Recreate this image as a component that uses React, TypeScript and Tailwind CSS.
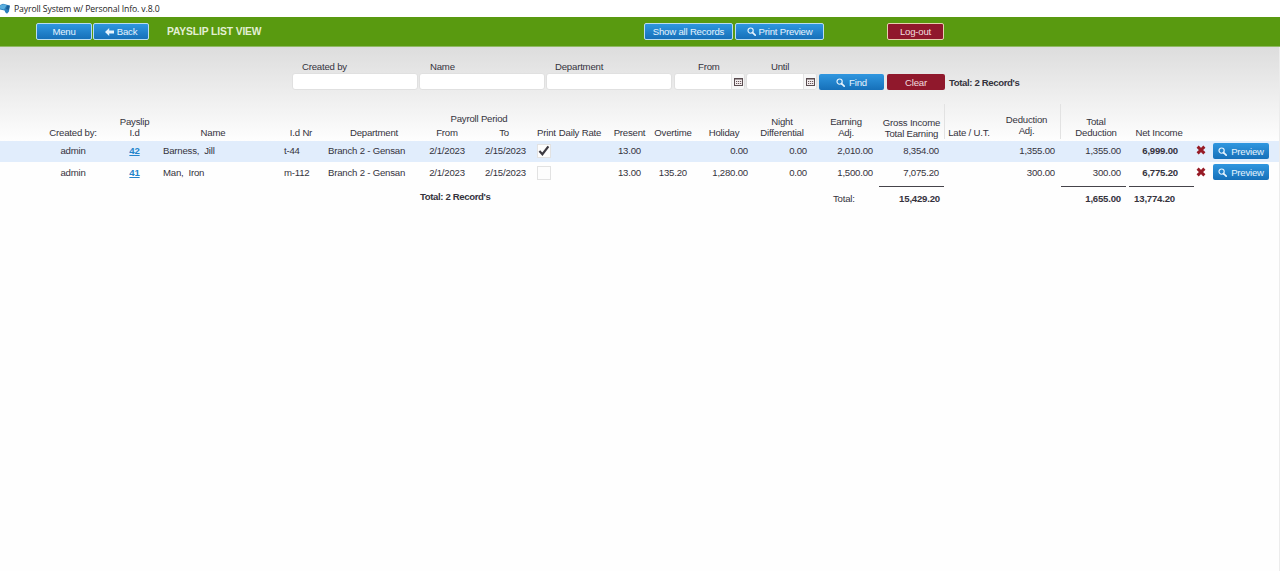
import { useState } from "react";
import type { ReactNode } from "react";
import clsx from "clsx";

type Payslip = {
  id: string;
  createdBy: string;
  name: string;
  idNr: string;
  department: string;
  from: string;
  to: string;
  dailyRate: string;
  present: string;
  overtime: string;
  holiday: string;
  night: string;
  earningAdj: string;
  gross: string;
  late: string;
  deductionAdj: string;
  totalDeduction: string;
  net: string;
};

const payslips: Payslip[] = [
  { id: "42", createdBy: "admin", name: "Barness,  Jill", idNr: "t-44", department: "Branch 2 - Gensan", from: "2/1/2023", to: "2/15/2023", dailyRate: "", present: "13.00", overtime: "", holiday: "0.00", night: "0.00", earningAdj: "2,010.00", gross: "8,354.00", late: "", deductionAdj: "1,355.00", totalDeduction: "1,355.00", net: "6,999.00" },
  { id: "41", createdBy: "admin", name: "Man,  Iron", idNr: "m-112", department: "Branch 2 - Gensan", from: "2/1/2023", to: "2/15/2023", dailyRate: "", present: "13.00", overtime: "135.20", holiday: "1,280.00", night: "0.00", earningAdj: "1,500.00", gross: "7,075.20", late: "", deductionAdj: "300.00", totalDeduction: "300.00", net: "6,775.20" },
];

function SearchIcon({ className }: { className?: string }) {
  return (
    <svg viewBox="0 0 10 10" className={clsx("size-[9px] shrink-0", className)} fill="none" stroke="currentColor" aria-hidden>
      <circle cx="4" cy="4" r="2.9" strokeWidth="1.3" />
      <path d="M6.2 6.2 9.1 9.1" strokeWidth="1.8" strokeLinecap="round" />
    </svg>
  );
}

function CalendarIcon() {
  return (
    <svg viewBox="0 0 9 8" className="h-2 w-[9px]" aria-hidden>
      <rect x="0.5" y="0.5" width="8" height="7" fill="#f3eeee" stroke="#5a4c50" />
      <path d="M0 1h9" stroke="#5a4c50" />
      <path d="M2 3.5h1.2M4 3.5h1.2M6 3.5h1.2M2 5.5h1.2M4 5.5h1.2M6 5.5h1.2" stroke="#6b565c" />
    </svg>
  );
}

function Button({ className, red, children }: { className: string; red?: boolean; children: ReactNode }) {
  return (
    <button
      className={clsx(
        "flex shrink-0 items-center justify-center rounded-[2px] whitespace-nowrap",
        red ? "bg-[#90182c] text-[#f0dcdf]" : "bg-linear-to-b from-[#2f97e0] to-[#1670b9] text-[#e6f3fd]",
        className,
      )}
    >
      {children}
    </button>
  );
}

function Field({ label, className, labelClass, date }: { label: string; className: string; labelClass: string; date?: boolean }) {
  return (
    <label className={clsx("flex shrink-0 flex-col", className)}>
      <span className={clsx("h-[13px] leading-[13px]", labelClass)}>{label}</span>
      <span className="flex h-[17px] overflow-hidden rounded-[3px] border border-[#e0e0e0] bg-white">
        <input className="min-w-0 flex-1 px-1 outline-none" />
        {date && (
          <span className="flex w-[13px] items-center justify-center border-l border-[#e4e4e4] bg-[#f7f7f7]">
            <CalendarIcon />
          </span>
        )}
      </span>
    </label>
  );
}

function Head({ className, lines }: { className: string; lines: string[] }) {
  return (
    <div className={clsx("flex shrink-0 flex-col justify-end text-center leading-[11px]", className)}>
      {lines.map((line) => (
        <span key={line}>{line}</span>
      ))}
    </div>
  );
}

function Row({ slip, active, checked, onToggle }: { slip: Payslip; active: boolean; checked: boolean; onToggle: () => void }) {
  return (
    <div className={clsx("flex h-[21px] items-center pl-10 *:shrink-0", active && "bg-[#e1edfc] pb-0.5")}>
      <div className="w-[66px] text-center">{slip.createdBy}</div>
      <div className="w-[57px] text-center">
        <a href="#" className="font-bold text-[#2384cb] underline underline-offset-1">{slip.id}</a>
      </div>
      <div className="w-[117px] whitespace-pre">{slip.name}</div>
      <div className="w-[42px] pl-1">{slip.idNr}</div>
      <div className="w-[104px] pl-1.5">{slip.department}</div>
      <div className="w-[42px] text-center">{slip.from}</div>
      <div className="w-[69px] pl-1.5 text-center">{slip.to}</div>
      <div className="w-5">
        <button
          aria-label="Print"
          onClick={onToggle}
          className="flex size-[14px] items-center justify-center border border-[#e2e2e2] bg-[#fdfdfd]"
        >
          {checked && (
            <svg viewBox="0 0 12 12" className="size-3" fill="none" stroke="#3d3a42" aria-hidden>
              <path d="M1.4 6 4.4 9.2 10.4 1.4" strokeWidth="2.2" />
            </svg>
          )}
        </button>
      </div>
      <div className="w-[46px]">{slip.dailyRate}</div>
      <div className="w-[49px] pr-[11px] text-right">{slip.present}</div>
      <div className="w-[42px] pr-[7px] text-right">{slip.overtime}</div>
      <div className="w-[60px] pr-1.5 text-right">{slip.holiday}</div>
      <div className="w-14 pr-[3px] text-right">{slip.night}</div>
      <div className="w-[69px] pr-1.5 text-right">{slip.earningAdj}</div>
      <div className="w-[66px] pr-1.5 text-right">{slip.gross}</div>
      <div className="w-12">{slip.late}</div>
      <div className="w-[68px] pr-1.5 text-right">{slip.deductionAdj}</div>
      <div className="w-[68px] pr-2 text-right">{slip.totalDeduction}</div>
      <div className="w-[65px] pr-4 text-right font-bold">{slip.net}</div>
      <div className="w-[19px] pl-0.5">
        <svg viewBox="0 0 10 10" className="mb-0.5 size-[10px]" aria-label="Delete">
          <path d="M1.6 1.6 8.4 8.4M8.4 1.6 1.6 8.4" stroke="#971b26" strokeWidth="2.9" />
        </svg>
      </div>
      <Button className={clsx("h-4 w-14 gap-1", active ? "mt-px" : "mb-px")}>
        <SearchIcon />
        Preview
      </Button>
    </div>
  );
}

export default function App() {
  const [printed, setPrinted] = useState<string[]>(["42"]);

  const toggle = (id: string) =>
    setPrinted((current) => (current.includes(id) ? current.filter((item) => item !== id) : [...current, id]));

  return (
    <div className="flex h-[571px] w-[1280px] flex-col overflow-hidden bg-[#fefefe] font-['Liberation_Sans',Arial,sans-serif] text-[9.6px] leading-[11px] tracking-[-0.2px] text-[#35333d]">
      <header className="flex h-[17px] shrink-0 items-center gap-[3px] bg-white">
        <svg viewBox="0 0 11 11" className="size-[11px]" aria-hidden>
          <path d="M0 2 3 .8 9.8 2.6 9 8.6 7 10.8 5.2 9.2 4.6 7.4 0 6.4Z" fill="#2b7fbd" />
          <path d="M0 2.4 3.6 1.2 6.6 2.2 4 6.4 0 5.6Z" fill="#5aaede" />
          <path d="M7 2.4 9.8 2.8 8.8 7 6 6Z" fill="#1c5f99" />
        </svg>
        <span className="pt-px font-['Open_Sans',sans-serif] text-[8.7px] leading-4 tracking-[-0.13px] text-[#242424]">Payroll System w/ Personal Info. v.8.0</span>
      </header>

      <div className="flex h-[30px] shrink-0 items-center border-b border-[#8fb964] bg-[#599a10] pl-9">
        <Button className="h-[17px] w-14 border border-[#b9dcf0]">Menu</Button>
        <Button className="ml-px h-[17px] w-14 gap-[3px] border border-[#b9dcf0]">
          <svg viewBox="0 0 9 8" className="h-2 w-[9px]" fill="currentColor" aria-hidden>
            <path d="M0 4 4.2 0v2.6H9v2.8H4.2V8Z" />
          </svg>
          Back
        </Button>
        <h1 className="ml-[18px] w-[477px] text-[10.3px] font-bold tracking-[-0.12px] text-[#e3efd4]">PAYSLIP LIST VIEW</h1>
        <Button className="h-[17px] w-[89px] border border-[#b9dcf0]">Show all Records</Button>
        <Button className="ml-0.5 h-[17px] w-[89px] gap-[3px] border border-[#b9dcf0]">
          <SearchIcon />
          Print Preview
        </Button>
        <Button red className="ml-[63px] h-[17px] w-[57px] border border-[#e6cfae]">Log-out</Button>
      </div>

      <main className="flex min-h-0 flex-1 flex-col border-r border-[#ececec]">
        <section className="shrink-0 bg-linear-to-b from-[#dddddd] to-[#fefefe]">
          <div className="flex h-[57px] items-start pt-[13px] pl-[292px]">
            <Field label="Created by" className="w-[126px]" labelClass="pl-2.5" />
            <Field label="Name" className="ml-px w-[126px]" labelClass="pl-[11px]" />
            <Field label="Department" className="ml-px w-[126px]" labelClass="pl-[9px]" />
            <Field label="From" className="ml-0.5 w-[71px]" labelClass="pl-6" date />
            <Field label="Until" className="ml-px w-[71px]" labelClass="pl-[25px]" date />
            <Button className="mt-[14px] ml-0.5 h-4 w-[65px] gap-1">
              <SearchIcon />
              Find
            </Button>
            <Button red className="mt-[14px] ml-[3px] h-4 w-[58px]">Clear</Button>
            <span className="mt-[17px] ml-1 font-bold tracking-[-0.37px]">Total: 2 Record's</span>
          </div>

          <div className="flex h-[37px] items-end pb-[3px] pl-10 whitespace-nowrap">
            <Head className="w-[66px]" lines={["Created by:"]} />
            <Head className="w-[57px]" lines={["Payslip", "I.d"]} />
            <Head className="w-[100px]" lines={["Name"]} />
            <Head className="ml-[17px] w-[42px]" lines={["I.d Nr"]} />
            <Head className="w-[104px]" lines={["Department"]} />
            <div className="flex w-[111px] shrink-0 flex-col gap-[3px]">
              <span className="pr-[5px] text-center">Payroll Period</span>
              <div className="flex">
                <Head className="w-[42px]" lines={["From"]} />
                <Head className="w-[69px] pl-[3px]" lines={["To"]} />
              </div>
            </div>
            <Head className="w-5 items-start" lines={["Print"]} />
            <Head className="w-[46px]" lines={["Daily Rate"]} />
            <Head className="w-[49px] pl-1" lines={["Present"]} />
            <Head className="w-[42px]" lines={["Overtime"]} />
            <Head className="w-[60px]" lines={["Holiday"]} />
            <Head className="w-14" lines={["Night", "Differential"]} />
            <Head className="w-[69px] pl-[3px]" lines={["Earning", "Adj."]} />
            <Head className="-mb-px h-[35px] w-[66px] border-r border-[#e2e2e2]" lines={["Gross Income", "Total Earning"]} />
            <Head className="w-12" lines={["Late / U.T."]} />
            <Head className="-mb-px h-[35px] w-[68px] border-r border-[#e2e2e2] pb-[3px]" lines={["Deduction", "Adj."]} />
            <Head className="w-[68px] pl-0.5" lines={["Total", "Deduction"]} />
            <Head className="w-[65px] pr-[5px]" lines={["Net Income"]} />
          </div>
        </section>

        <section className="shrink-0">
          {payslips.map((slip, index) => (
            <Row key={slip.id} slip={slip} active={index === 0} checked={printed.includes(slip.id)} onToggle={() => toggle(slip.id)} />
          ))}
        </section>

        <div className="flex items-start pt-[3px] pl-[420px] font-bold *:shrink-0">
          <span className="w-[413px] pt-[5px] tracking-[-0.37px]">Total: 2 Record's</span>
          <span className="w-[46px] pt-[7px] font-normal">Total:</span>
          <span className="w-[65px] border-t border-[#45434a] pt-1.5 pr-1 text-right">15,429.20</span>
          <span className="ml-[117px] w-[65px] border-t border-[#45434a] pt-1.5 pr-[5px] text-right">1,655.00</span>
          <span className="ml-[3px] w-[65px] border-t border-[#45434a] pt-1.5 pr-[19px] text-right">13,774.20</span>
        </div>
      </main>
    </div>
  );
}
